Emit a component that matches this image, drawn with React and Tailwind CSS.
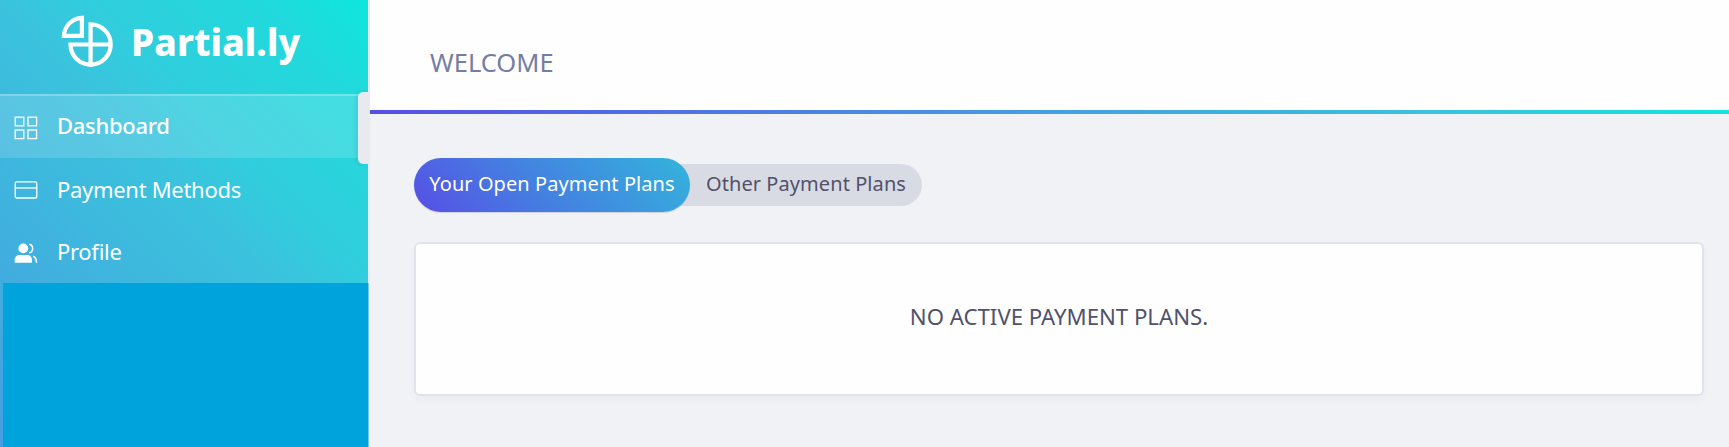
function Logo() {
  return (
    <svg className="h-[52px] w-[54px] shrink-0" viewBox="61 15 54 52" fill="none" stroke="#fff" strokeWidth="4.2">
      <path d="M81.9 35.9V17.8C71.9 18.4 64.4 26 63.9 35.9Z" />
      <path d="M90.6 67V24.4A20.1 20.1 0 1 1 70.5 44.5H110.7" />
    </svg>
  );
}

function GridIcon() {
  return (
    <svg className="mt-0.5 size-6 shrink-0" viewBox="0 0 24 24" fill="none" stroke="#fff" strokeWidth="1.3">
      <rect x="1.2" y="1.2" width="8.6" height="8.6" />
      <rect x="14" y="1.2" width="8.6" height="8.6" />
      <rect x="1.2" y="14" width="8.6" height="8.6" />
      <rect x="14" y="14" width="8.6" height="8.6" />
    </svg>
  );
}

function CardIcon() {
  return (
    <svg className="size-6 shrink-0" viewBox="0 0 24 24" fill="none" stroke="#fff" strokeWidth="1.3">
      <rect x="1.2" y="3.8" width="21.6" height="16.2" rx="1.6" />
      <path d="M1.2 10h21.6" />
    </svg>
  );
}

function PeopleIcon() {
  return (
    <svg className="size-6 shrink-0" viewBox="0 0 24 24" fill="none">
      <circle cx="9.3" cy="7.4" r="4.9" fill="#fff" />
      <path d="M.7 21.8V18.8C.7 16.2 2.7 14 5.3 14h8.1c2.6 0 4.6 2.2 4.6 4.8v3Z" fill="#fff" />
      <path d="M15.2 3.2c4.6.7 4.6 7.8 0 8.5M19.2 15.2c2.3.7 3.3 3.2 3.3 6.6" stroke="#fff" strokeWidth="1.5" />
    </svg>
  );
}

export default function App() {
  return (
    <div className="flex h-[447px] w-full overflow-hidden bg-[#f1f2f6] font-['Noto_Sans',sans-serif]">
      <aside className="relative flex w-[370px] shrink-0 flex-col border-r-2 border-[#e9eaef] bg-[linear-gradient(225deg,#0de6dd_0px,#1fdbdc_65px,#31cddd_200px,#3ac3dd_260px,#42abdf_465px,#489de0_576px)] text-white">
        <div className="flex h-[94px] items-start gap-4 pt-[15px] pl-[61px]">
          <Logo />
          <span className="pt-[5px] text-[37px] leading-[44px] font-extrabold tracking-[0.1px] whitespace-nowrap">Partial.ly</span>
        </div>
        <nav className="flex flex-col text-[22px] tracking-[-0.3px] whitespace-nowrap">
          <a className="flex h-16 items-center gap-[19px] border-t-2 border-white/25 bg-white/15 pl-3.5 font-medium">
            <GridIcon />
            <span className="pb-[3px]">Dashboard</span>
          </a>
          <a className="flex h-16 items-center gap-[19px] pl-3.5">
            <CardIcon />
            <span className="pb-0.5">Payment Methods</span>
          </a>
          <a className="flex h-[61px] items-center gap-[19px] pl-3.5">
            <PeopleIcon />
            <span className="pb-[3px]">Profile</span>
          </a>
        </nav>
        <div className="-mr-px ml-[3px] flex-1 border-r border-[#7cc9ec] bg-[#00a3db]" />
        <div className="absolute top-[92px] -right-0.5 h-[72px] w-3 rounded-l-[5px] bg-[#e9eaef] shadow-[-2px_0_4px_rgba(0,0,0,0.08)]" />
      </aside>
      <main className="flex min-w-0 flex-1 flex-col">
        <header className="h-[110px] bg-[#fefefe] pt-[43px] pl-[60px]">
          <h1 className="text-[25.5px] leading-[38px] text-[#757da3]">WELCOME</h1>
        </header>
        <div className="h-1 shrink-0 bg-[linear-gradient(90deg,#574ee5,#459fe2_50%,#38c4dd_80%,#10e6dc)]" />
        <div className="flex flex-col pt-11 pr-[25px] pl-11">
          <div className="flex items-center text-[20px] tracking-[0.07px] whitespace-nowrap">
            <button className="z-10 h-[54px] w-[276px] rounded-full bg-[linear-gradient(45deg,#574ee5,#4481e1_45%,#33b4dc)] pb-0.5 text-white shadow-[0_1px_1px_rgba(80,80,110,0.2)]">
              Your Open Payment Plans
            </button>
            <button className="-ml-8 h-[42px] w-[264px] rounded-r-full bg-[#d9dbe4] pb-0.5 pl-8 text-[#50526a]">
              Other Payment Plans
            </button>
          </div>
          <section className="mt-[30px] flex h-[154px] items-center justify-center rounded-md border-2 border-[#e1e3ea] bg-[#fefefe] pb-1 text-[22.2px] text-[#50526a] shadow-[0_4px_8px_rgba(60,60,90,0.03)]">
            <p>NO ACTIVE PAYMENT PLANS.</p>
          </section>
        </div>
      </main>
    </div>
  );
}
